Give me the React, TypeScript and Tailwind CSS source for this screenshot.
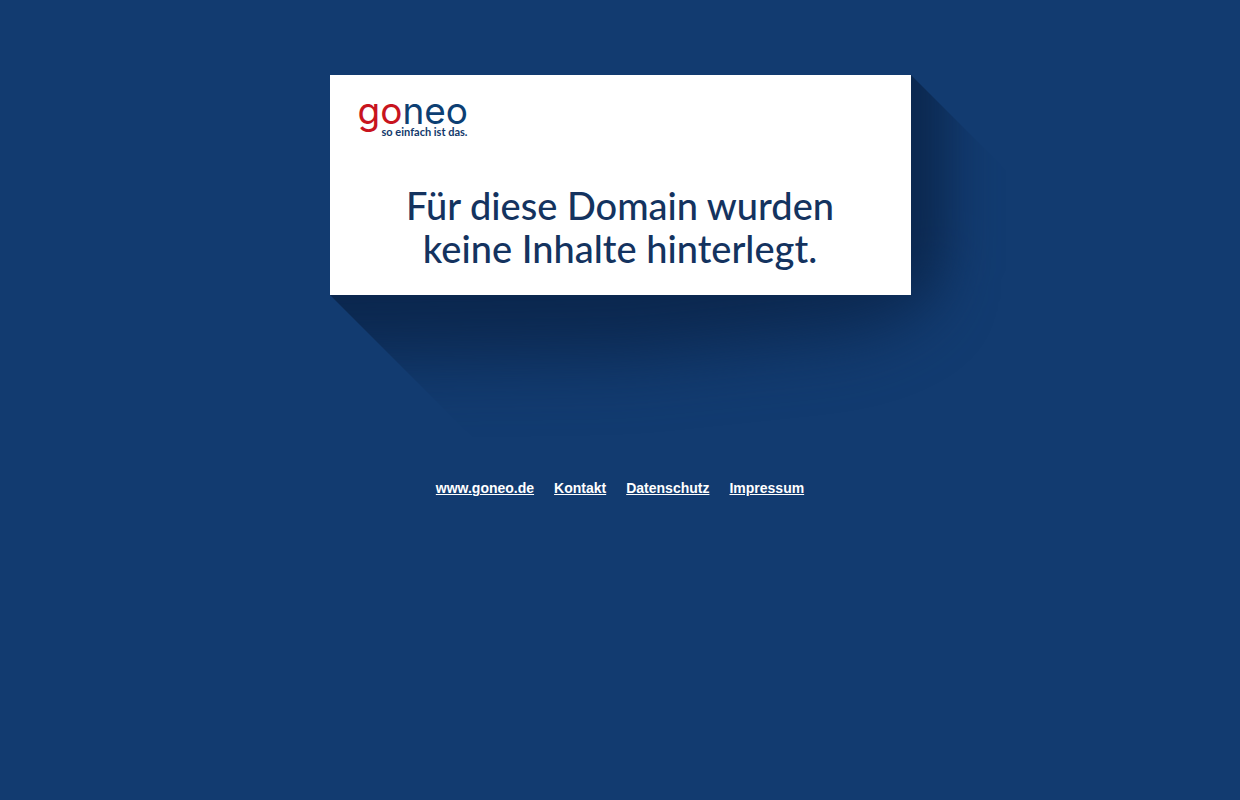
const links = [
  { label: "www.goneo.de", href: "https://www.goneo.de" },
  { label: "Kontakt", href: "#kontakt" },
  { label: "Datenschutz", href: "#datenschutz" },
  { label: "Impressum", href: "#impressum" },
];

function CardShadow() {
  return (
    <svg
      className="absolute left-0 top-0 overflow-visible pointer-events-none"
      width="700"
      height="400"
      viewBox="0 0 700 400"
      aria-hidden="true"
    >
      <defs>
        <filter id="soft" x="-30%" y="-30%" width="160%" height="180%" colorInterpolationFilters="sRGB">
          <feGaussianBlur stdDeviation="25 34" />
        </filter>
        <clipPath id="cast">
          <path d="M0 220 L180 400 H700 V119 L581 0 V220 Z" />
        </clipPath>
      </defs>
      <g clipPath="url(#cast)">
        <path
          d="M-200 -220 H616 V195 Q600 238 510 256 L300 278 L-200 286 Z"
          fill="#0b274e"
          filter="url(#soft)"
        />
      </g>
    </svg>
  );
}

function Logo() {
  return (
    <a href="https://www.goneo.de" className="flex w-[110px] flex-col" aria-label="goneo – so einfach ist das.">
      <span className="font-['Inter',sans-serif] text-[37px] leading-[31px] text-[#0d3f73]">
        <span className="text-[#c8141e]">go</span>neo
      </span>
      <span className="self-end whitespace-nowrap text-[11px] leading-3 font-bold text-[#12386b]">
        so einfach ist das.
      </span>
    </a>
  );
}

export default function App() {
  return (
    <div className="min-h-screen bg-[#123b70] px-4 pt-[75px] pb-8">
      <main className="relative mx-auto w-full max-w-[581px]">
        <CardShadow />
        <div className="relative min-h-[220px] bg-white px-7 pt-5 pb-6 font-['Lato',sans-serif]">
          <Logo />
          <h1 className="mt-[46px] text-center text-[38px] leading-[43px] font-medium text-[#14335f]">
            Für diese Domain wurden
            <br />
            keine Inhalte hinterlegt.
          </h1>
        </div>
      </main>
      <nav className="relative mt-[185px] flex flex-wrap justify-center gap-5 font-['Liberation_Sans',Arial,sans-serif] text-sm leading-4 font-bold text-white">
        {links.map((link) => (
          <a key={link.label} href={link.href} className="underline">
            {link.label}
          </a>
        ))}
      </nav>
    </div>
  );
}
